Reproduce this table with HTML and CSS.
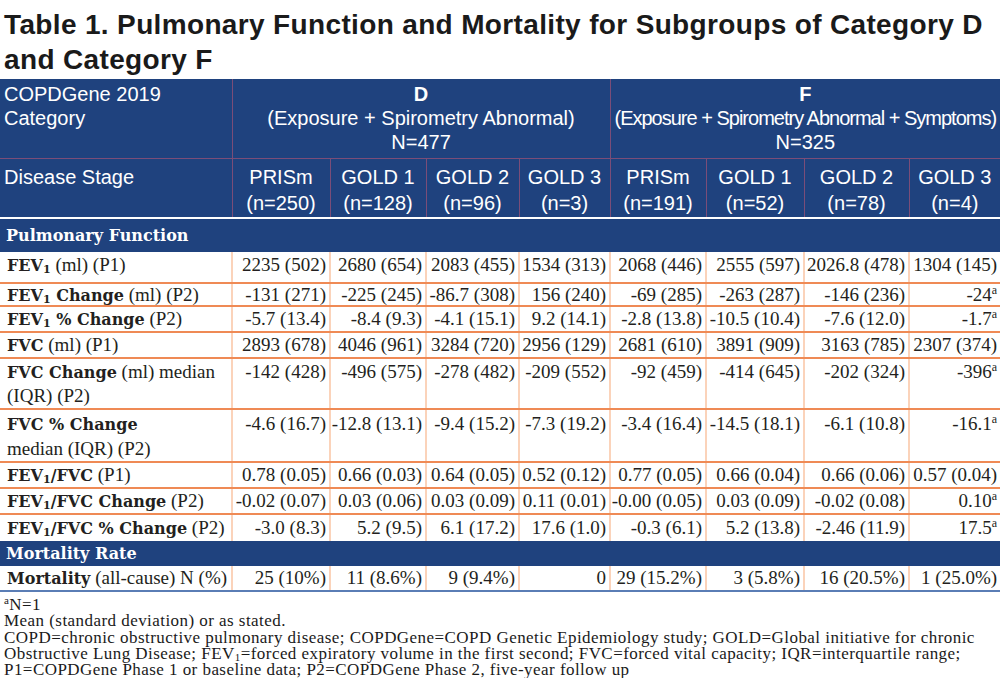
FILE: index.html
```html
<!DOCTYPE html>
<html>
<head>
<meta charset="utf-8">
<link rel="stylesheet" href="styles.css">
</head>
<body>
<h1 class="title">Table 1. Pulmonary Function and Mortality for Subgroups of Category D and Category F</h1>
<table class="tbl">
  <colgroup>
    <col class="c0"><col class="c1"><col class="c2"><col class="c3"><col class="c4"><col class="c5"><col class="c6"><col class="c7"><col class="c8">
  </colgroup>
  <thead>
    <tr class="h1">
      <th class="lab">COPDGene 2019<br>Category</th>
      <th colspan="4"><b>D</b><br>(Exposure + Spirometry Abnormal)<br>N=477</th>
      <th colspan="4"><b>F</b><br><span class="tight">(Exposure + Spirometry Abnormal + Symptoms)</span><br>N=325</th>
    </tr>
    <tr class="h2">
      <th class="lab">Disease Stage</th>
      <th>PRISm<br>(n=250)</th>
      <th>GOLD 1<br>(n=128)</th>
      <th>GOLD 2<br>(n=96)</th>
      <th>GOLD 3<br>(n=3)</th>
      <th>PRISm<br>(n=191)</th>
      <th>GOLD 1<br>(n=52)</th>
      <th>GOLD 2<br>(n=78)</th>
      <th>GOLD 3<br>(n=4)</th>
    </tr>
  </thead>
  <tbody>
    <tr class="sec first"><td colspan="9">Pulmonary Function</td></tr>
    <tr class="row r30">
      <td class="lab"><b>FEV<sub>1</sub></b> (ml) (P1)</td>
      <td>2235 (502)</td><td>2680 (654)</td><td>2083 (455)</td><td>1534 (313)</td>
      <td>2068 (446)</td><td>2555 (597)</td><td>2026.8 (478)</td><td>1304 (145)</td>
    </tr>
    <tr class="row r22">
      <td class="lab"><b>FEV<sub>1</sub> Change</b> (ml) (P2)</td>
      <td>-131 (271)</td><td>-225 (245)</td><td>-86.7 (308)</td><td>156 (240)</td>
      <td>-69 (285)</td><td>-263 (287)</td><td>-146 (236)</td><td>-24<sup>a</sup></td>
    </tr>
    <tr class="row r26">
      <td class="lab"><b>FEV<sub>1</sub> % Change</b> (P2)</td>
      <td>-5.7 (13.4)</td><td>-8.4 (9.3)</td><td>-4.1 (15.1)</td><td>9.2 (14.1)</td>
      <td>-2.8 (13.8)</td><td>-10.5 (10.4)</td><td>-7.6 (12.0)</td><td>-1.7<sup>a</sup></td>
    </tr>
    <tr class="row r25">
      <td class="lab"><b>FVC</b> (ml) (P1)</td>
      <td>2893 (678)</td><td>4046 (961)</td><td>3284 (720)</td><td>2956 (129)</td>
      <td>2681 (610)</td><td>3891 (909)</td><td>3163 (785)</td><td>2307 (374)</td>
    </tr>
    <tr class="row r52">
      <td class="lab"><b>FVC Change</b> (ml) median<br>(IQR) (P2)</td>
      <td>-142 (428)</td><td>-496 (575)</td><td>-278 (482)</td><td>-209 (552)</td>
      <td>-92 (459)</td><td>-414 (645)</td><td>-202 (324)</td><td>-396<sup>a</sup></td>
    </tr>
    <tr class="row r54">
      <td class="lab"><b>FVC % Change</b><br>median (IQR) (P2)</td>
      <td>-4.6 (16.7)</td><td>-12.8 (13.1)</td><td>-9.4 (15.2)</td><td>-7.3 (19.2)</td>
      <td>-3.4 (16.4)</td><td>-14.5 (18.1)</td><td>-6.1 (10.8)</td><td>-16.1<sup>a</sup></td>
    </tr>
    <tr class="row r26">
      <td class="lab"><b>FEV<sub>1</sub>/FVC</b> (P1)</td>
      <td>0.78 (0.05)</td><td>0.66 (0.03)</td><td>0.64 (0.05)</td><td>0.52 (0.12)</td>
      <td>0.77 (0.05)</td><td>0.66 (0.04)</td><td>0.66 (0.06)</td><td>0.57 (0.04)</td>
    </tr>
    <tr class="row r25">
      <td class="lab"><b>FEV<sub>1</sub>/FVC Change</b> (P2)</td>
      <td>-0.02 (0.07)</td><td>0.03 (0.06)</td><td>0.03 (0.09)</td><td>0.11 (0.01)</td>
      <td>-0.00 (0.05)</td><td>0.03 (0.09)</td><td>-0.02 (0.08)</td><td>0.10<sup>a</sup></td>
    </tr>
    <tr class="row r27 last">
      <td class="lab"><b>FEV<sub>1</sub>/FVC % Change</b> (P2)</td>
      <td>-3.0 (8.3)</td><td>5.2 (9.5)</td><td>6.1 (17.2)</td><td>17.6 (1.0)</td>
      <td>-0.3 (6.1)</td><td>5.2 (13.8)</td><td>-2.46 (11.9)</td><td>17.5<sup>a</sup></td>
    </tr>
    <tr class="sec sec2"><td colspan="9">Mortality Rate</td></tr>
    <tr class="row r26 last bottom">
      <td class="lab"><b>Mortality</b> (all-cause) N (%)</td>
      <td>25 (10%)</td><td>11 (8.6%)</td><td>9 (9.4%)</td><td>0</td>
      <td>29 (15.2%)</td><td>3 (5.8%)</td><td>16 (20.5%)</td><td>1 (25.0%)</td>
    </tr>
  </tbody>
</table>
<div class="notes">
  <p><sup>a</sup>N=1</p>
  <p>Mean (standard deviation) or as stated.</p>
  <p>COPD=chronic obstructive pulmonary disease; COPDGene=COPD Genetic Epidemiology study; GOLD=Global initiative for chronic<br>Obstructive Lung Disease; FEV<sub>1</sub>=forced expiratory volume in the first second; FVC=forced vital capacity; IQR=interquartile range;<br>P1=COPDGene Phase 1 or baseline data; P2=COPDGene Phase 2, five-year follow up</p>
</div>
</body>
</html>
```

FILE: styles.css
```css
html, body {
  margin: 0;
  padding: 0;
  background: #ffffff;
  width: 1000px;
  overflow: hidden;
}

.title {
  margin: 0;
  padding: 7px 0 0 4px;
  height: 79px;
  box-sizing: border-box;
  font-family: "Liberation Sans", Arial, sans-serif;
  font-weight: bold;
  font-size: 28px;
  line-height: 35px;
  letter-spacing: 0.35px;
  color: #1a1a1a;
}

.tbl {
  width: 1000px;
  border-collapse: collapse;
  table-layout: fixed;
}

.c0 { width: 232px; }
.c1 { width: 98px; }
.c2 { width: 96px; }
.c3 { width: 93px; }
.c4 { width: 91px; }
.c5 { width: 96px; }
.c6 { width: 98px; }
.c7 { width: 105px; }
.c8 { width: 91px; }

thead th {
  background: #1f427e;
  color: #ffffff;
  font-family: "Liberation Sans", Arial, sans-serif;
  font-weight: normal;
  font-size: 20px;
  text-align: center;
  vertical-align: top;
  white-space: nowrap;
  border: 1px solid #7b4d78;
  padding: 0;
  overflow: hidden;
}

thead th b {
  font-weight: bold;
}

thead th.lab {
  text-align: left;
  padding-left: 4px;
  border-left: none;
}

.h1 th {
  height: 79px;
  line-height: 24px;
  padding-top: 3px;
  box-sizing: border-box;
  border-top: none;
}

.h1 th:last-child,
.h2 th:last-child {
  border-right: none;
}

.h2 th {
  height: 60px;
  line-height: 26px;
  padding-top: 5px;
  box-sizing: border-box;
  border-bottom: 2px solid #ffffff;
}

.tight {
  letter-spacing: -1px;
}

.sec td {
  background: #1f427e;
  color: #ffffff;
  font-family: "DejaVu Serif", "Liberation Serif", serif;
  font-weight: bold;
  font-size: 16px;
  line-height: 20px;
  padding: 0 0 0 6px;
  height: 33px;
  border: none;
}

.sec2 td {
  height: 25px;
}

.row td {
  font-family: "Liberation Serif", "Times New Roman", serif;
  font-size: 19px;
  line-height: 24px;
  color: #231f20;
  text-align: right;
  vertical-align: top;
  white-space: nowrap;
  padding: 0 3px 0 0;
  border-left: 2px solid #fbd3ba;
  border-bottom: 2px solid #ef8a55;
  overflow: visible;
}

.row td.lab {
  text-align: left;
  padding-left: 7px;
  border-left: none;
}

.row td:first-child {
  border-left: none;
}

.row.r30 td { height: 31px; line-height: 24px; padding-top: 1px; box-sizing: border-box; }
.row.r22 td { height: 21px; line-height: 21px; }
.row.r25 td { height: 23px; }
.row.r26 td { height: 24px; }
.row.r27 td { height: 26px; line-height: 26px; }
.row.r52 td { height: 48px; line-height: 24px; padding-top: 1px; }
.row.r54 td { height: 50px; line-height: 25px; padding-top: 1px; box-sizing: border-box; }

.row.last td {
  border-bottom: none;
}

.row.bottom td {
  border-bottom: 2px solid #5a7db5;
}

.row b {
  font-family: "DejaVu Serif", "Liberation Serif", serif;
  font-weight: bold;
  font-size: 16px;
  line-height: 16px;
}

.row sub {
  font-size: 11px;
  vertical-align: -2px;
  line-height: 0;
}

.row sup {
  font-size: 12px;
  vertical-align: 7px;
  line-height: 0;
}

.notes {
  padding: 5px 0 0 4px;
  font-family: "Liberation Serif", "Times New Roman", serif;
  font-size: 17px;
  line-height: 16.3px;
  letter-spacing: 0.45px;
  color: #1a1a1a;
}

.notes p {
  margin: 0;
  white-space: nowrap;
}

.notes sup {
  font-size: 11px;
  vertical-align: 6px;
  line-height: 0;
}

.notes sub {
  font-size: 11px;
  vertical-align: -2px;
  line-height: 0;
}
```
